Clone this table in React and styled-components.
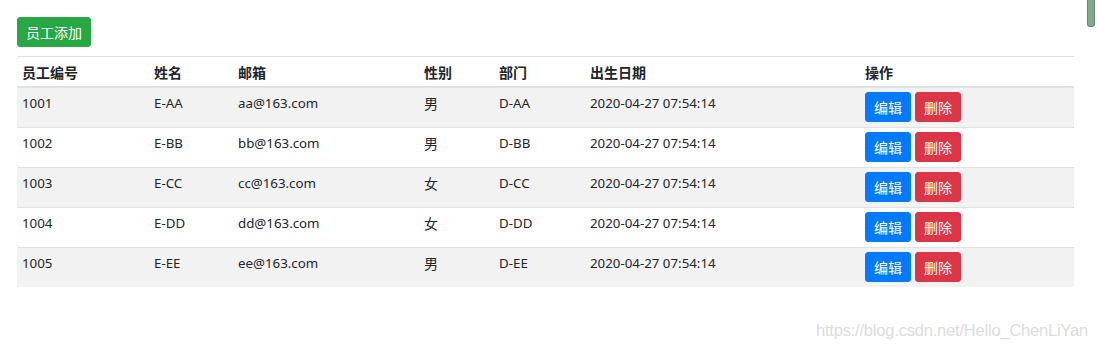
import React from 'react';
import styled, { createGlobalStyle } from 'styled-components';

const GlobalStyle = createGlobalStyle`
  html, body {
    margin: 0;
    padding: 0;
    background: #fff;
  }
  body {
    font-family: "Segoe UI", "Noto Sans", "Noto Sans CJK SC", sans-serif;
    font-size: 14px;
    color: #212529;
    overflow: hidden;
  }
`;

const Page = styled.div`
  position: relative;
  width: 1097px;
  height: 351px;
  padding: 17px 23px 0 17px;
  box-sizing: border-box;
`;

const Toolbar = styled.div`
  display: flex;
  margin-bottom: 9px;
`;

const Button = styled.button`
  display: inline-flex;
  align-items: center;
  justify-content: center;
  height: 30px;
  padding: 0 8px;
  border: 1px solid ${({ $color }) => $color};
  background-color: ${({ $color }) => $color};
  color: #fff;
  border-radius: 3px;
  font-family: "Noto Sans CJK SC", sans-serif;
  font-size: 14px;
  line-height: 1;
  cursor: pointer;
`;

const Table = styled.table`
  width: 1057px;
  border-collapse: collapse;
  table-layout: fixed;
`;

const HeadCell = styled.th`
  text-align: left;
  font-family: "Noto Sans CJK SC", sans-serif;
  font-weight: 700;
  font-size: 14px;
  height: 29px;
  padding: 0 5px;
  border-top: 1px solid #dee2e6;
  border-bottom: 2px solid #dee2e6;
  vertical-align: middle;
`;

const Row = styled.tr`
  background-color: ${({ $striped }) => ($striped ? '#f2f2f2' : '#fff')};
`;

const Cell = styled.td`
  height: 40px;
  padding: 4px 5px 0;
  box-sizing: border-box;
  vertical-align: top;
  line-height: 22px;
  border-top: 1px solid #dee2e6;
  font-size: ${({ $cjk }) => ($cjk ? '14px' : '13.3px')};
  font-family: ${({ $cjk }) => ($cjk ? '"Noto Sans CJK SC", sans-serif' : 'inherit')};
`;

const Actions = styled.div`
  display: flex;
  gap: 4px;
`;

const Watermark = styled.div`
  position: absolute;
  right: 9px;
  bottom: 11px;
  font-family: "Liberation Sans", Arial, sans-serif;
  font-size: 16.5px;
  color: #dcdcdc;
  letter-spacing: -0.2px;
`;

const ScrollThumb = styled.div`
  position: absolute;
  top: 0;
  right: 2px;
  width: 6px;
  height: 26px;
  border: 1px solid #7a7a7a;
  border-top: none;
  border-radius: 0 0 3px 3px;
  background: repeating-linear-gradient(
    to bottom,
    #5fc46f 0,
    #5fc46f 1px,
    #9a9a9a 1px,
    #9a9a9a 2px
  );
`;

const columns = [
  { label: '员工编号', width: 132 },
  { label: '姓名', width: 84 },
  { label: '邮箱', width: 186 },
  { label: '性别', width: 75 },
  { label: '部门', width: 91 },
  { label: '出生日期', width: 275 },
  { label: '操作', width: 214 },
];

const employees = [
  { id: 1001, name: 'E-AA', email: 'aa@163.com', gender: '男', dept: 'D-AA' },
  { id: 1002, name: 'E-BB', email: 'bb@163.com', gender: '男', dept: 'D-BB' },
  { id: 1003, name: 'E-CC', email: 'cc@163.com', gender: '女', dept: 'D-CC' },
  { id: 1004, name: 'E-DD', email: 'dd@163.com', gender: '女', dept: 'D-DD' },
  { id: 1005, name: 'E-EE', email: 'ee@163.com', gender: '男', dept: 'D-EE' },
];

export default function App() {
  return (
    <Page>
      <GlobalStyle />
      <Toolbar>
        <Button $color="#28a745">员工添加</Button>
      </Toolbar>
      <Table>
        <colgroup>
          {columns.map((c) => (
            <col key={c.label} style={{ width: c.width }} />
          ))}
        </colgroup>
        <thead>
          <tr>
            {columns.map((c) => (
              <HeadCell key={c.label}>{c.label}</HeadCell>
            ))}
          </tr>
        </thead>
        <tbody>
          {employees.map((e, i) => (
            <Row key={e.id} $striped={i % 2 === 0}>
              <Cell>{e.id}</Cell>
              <Cell>{e.name}</Cell>
              <Cell>{e.email}</Cell>
              <Cell $cjk>{e.gender}</Cell>
              <Cell>{e.dept}</Cell>
              <Cell>2020-04-27 07:54:14</Cell>
              <Cell>
                <Actions>
                  <Button $color="#007bff">编辑</Button>
                  <Button $color="#dc3545">删除</Button>
                </Actions>
              </Cell>
            </Row>
          ))}
        </tbody>
      </Table>
      <Watermark>https://blog.csdn.net/Hello_ChenLiYan</Watermark>
      <ScrollThumb />
    </Page>
  );
}
